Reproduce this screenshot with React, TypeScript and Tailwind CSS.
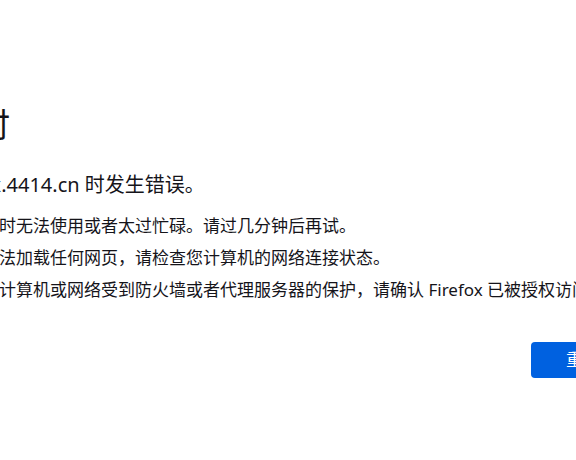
export default function App() {
  return (
    <div
      className="w-[576px] h-[460px] overflow-hidden bg-white text-[#15141a]"
      style={{ fontFamily: '"Noto Sans", "Noto Sans CJK SC", sans-serif' }}
    >
      <div className="flex flex-col pt-[105px] w-[900px]">
        <h1 className="ml-[-122px] text-[33px] leading-[40px] font-normal whitespace-nowrap">
          连接超时
        </h1>
        <p className="ml-[-157px] mt-[25px] text-[20px] leading-[30px] whitespace-nowrap">
          在连接到 www.kx.4414.cn 时发生错误。
        </p>
        <ul className="ml-[-69px] mt-[14px] flex flex-col gap-[8px] text-[17px] leading-[24px] whitespace-nowrap">
          <li>此站点暂时无法使用或者太过忙碌。请过几分钟后再试。</li>
          <li>如果您无法加载任何网页，请检查您计算机的网络连接状态。</li>
          <li>如果您的计算机或网络受到防火墙或者代理服务器的保护，请确认 Firefox 已被授权访问网络。</li>
        </ul>
        <div className="ml-[531px] mt-[40px]">
          <button className="h-[36px] pl-[35px] pr-[35px] rounded-[4px] bg-[#0061e0] text-white text-[17px] whitespace-nowrap">
            重试
          </button>
        </div>
      </div>
    </div>
  );
}
